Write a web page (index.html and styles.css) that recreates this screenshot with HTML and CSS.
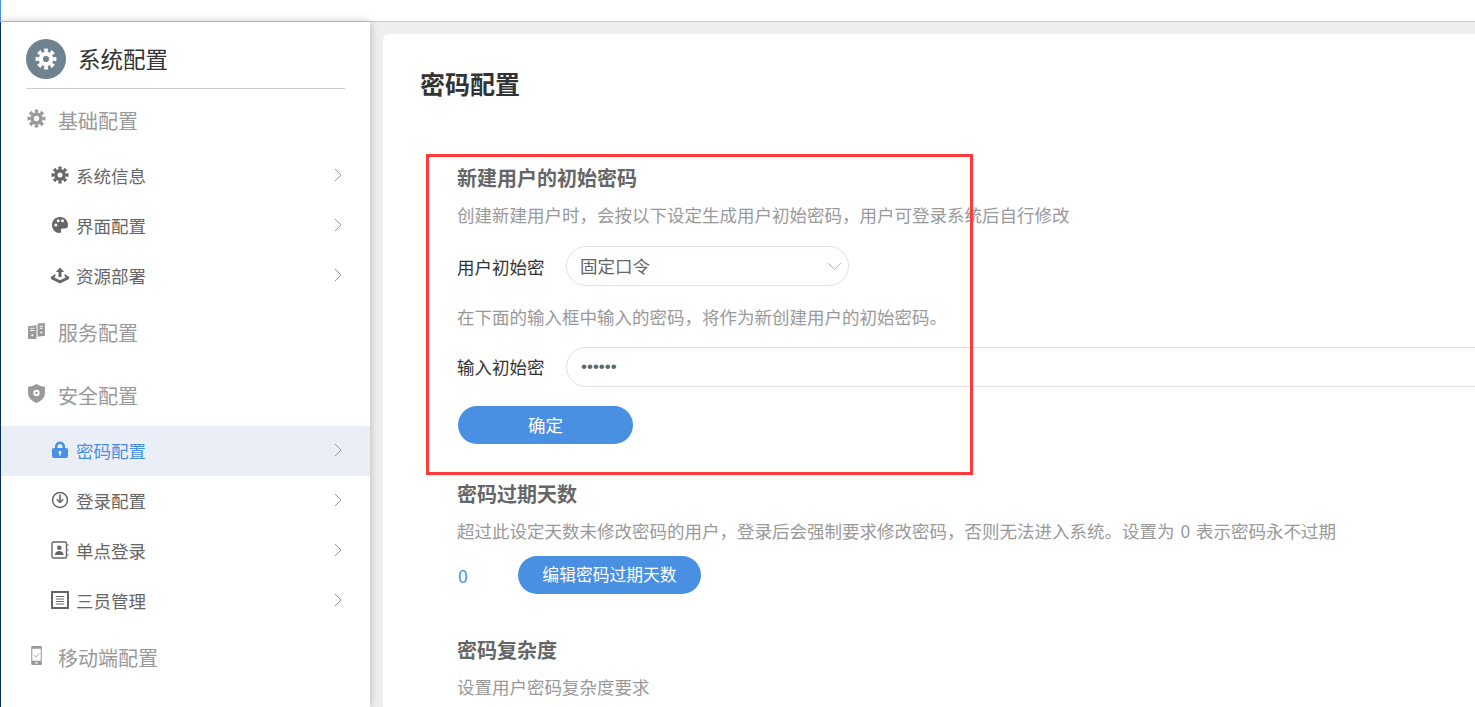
FILE: index.html
```html
<!DOCTYPE html>
<html lang="zh-CN">
<head>
<meta charset="utf-8">
<title>密码配置</title>
<link rel="stylesheet" href="styles.css">
</head>
<body>
<svg class="defs" width="0" height="0" aria-hidden="true">
  <symbol id="gear" viewBox="0 0 20 20">
    <circle cx="10" cy="10" r="4.7" fill="none" stroke="currentColor" stroke-width="3.8"/>
    <circle cx="10" cy="10" r="7.9" fill="none" stroke="currentColor" stroke-width="3.2" stroke-dasharray="3.6 2.6" stroke-dashoffset="1.8" pathLength="49.6"/>
  </symbol>
  <symbol id="chev" viewBox="0 0 8 14">
    <path d="M1 1l6 6-6 6" fill="none" stroke="currentColor" stroke-width="1"/>
  </symbol>
</svg>
<div class="topbar"></div>
<div class="shell">
  <aside class="sidebar">
    <header class="side-head">
      <span class="side-logo"><svg class="logo-gear"><use href="#gear"/></svg></span>
      <span class="side-title">系统配置</span>
    </header>
    <div class="group"><svg class="gicon"><use href="#gear"/></svg><span>基础配置</span></div>
    <ul class="items">
      <li class="item"><svg class="iicon"><use href="#gear"/></svg><span class="item-text">系统信息</span><svg class="chev"><use href="#chev"/></svg></li>
      <li class="item">
        <svg class="iicon" viewBox="0 0 18 18"><path fill-rule="evenodd" d="M9 1C4.400 1 1 4.600 1 9c0 4.500 3.500 8 7.500 8 1.700 0 2-1.100 1.500-2.200-.6-1.300.2-2.300 1.500-2.300H14c2 0 3-1.500 3-3.500C17 4.300 13.500 1 9 1zM4.800 10.600a1.500 1.500 0 1 1 0-3 1.500 1.500 0 0 1 0 3zM7.200 6.300a1.500 1.500 0 1 1 0-3 1.500 1.500 0 0 1 0 3zM11.500 6.300a1.500 1.500 0 1 1 0-3 1.500 1.500 0 0 1 0 3z" fill="currentColor"/></svg>
        <span class="item-text">界面配置</span><svg class="chev"><use href="#chev"/></svg></li>
      <li class="item">
        <svg class="iicon" viewBox="0 0 18 18"><path d="M9 1.500L4.800 6H7.500v5h3V6h2.700z" fill="currentColor"/><path d="M4.500 8L0 10.700v2.300l9 4.500 9-4.500v-2.300L13.500 8v2.200l1.500 1-6 3-6-3 1.500-1z" fill="currentColor"/></svg>
        <span class="item-text">资源部署</span><svg class="chev"><use href="#chev"/></svg></li>
    </ul>
    <div class="group group-tall">
      <svg class="gicon" viewBox="0 0 18 18"><path d="M1 4l8-1v13H1z" fill="currentColor"/><path d="M10 1.500l7-.5v12l-7 1z" fill="currentColor"/><path d="M3 6h4M3 8h4M12 4h3M12 6h3" stroke="#fff"/><circle cx="13.500" cy="10" r="1" fill="#fff"/><circle cx="5" cy="12.500" r="1" fill="#fff"/></svg>
      <span>服务配置</span></div>
    <div class="group">
      <svg class="gicon" viewBox="0 0 18 18"><path fill-rule="evenodd" d="M9 0c2.500 1.500 5 2.500 8 2.500v6c0 4.500-3.500 7.500-8 9.500-4.500-2-8-5-8-9.500v-6c3 0 5.500-1 8-2.500zM9 5.500a3 3 0 1 0 0 6 3 3 0 0 0 0-6z" fill="currentColor"/><circle cx="9" cy="8.500" r="1.200" fill="currentColor"/></svg>
      <span>安全配置</span></div>
    <ul class="items">
      <li class="item item-active">
        <svg class="iicon" viewBox="0 0 18 18"><path fill-rule="evenodd" d="M3 7h1V5.500a5 5 0 0 1 10 0V7h1a2 2 0 0 1 2 2v6a2 2 0 0 1-2 2H3a2 2 0 0 1-2-2V9a2 2 0 0 1 2-2zM6.500 7h5V5.500a2.500 2.500 0 0 0-5 0zM9 9.800a1.500 1.500 0 0 0-.8 2.800V14.500h1.600v-1.900A1.500 1.500 0 0 0 9 9.800z" fill="currentColor"/></svg>
        <span class="item-text">密码配置</span><svg class="chev"><use href="#chev"/></svg></li>
      <li class="item">
        <svg class="iicon" viewBox="0 0 18 18"><circle cx="9" cy="9" r="7.500" fill="none" stroke="currentColor" stroke-width="1.500"/><path d="M8.200 3.500h1.600v6.200l2-2 1 1L9 12.500 5.200 8.700l1-1 2 2z" fill="currentColor"/></svg>
        <span class="item-text">登录配置</span><svg class="chev"><use href="#chev"/></svg></li>
      <li class="item">
        <svg class="iicon" viewBox="0 0 18 18"><rect x="1" y="1" width="14.500" height="16" rx="1.500" fill="none" stroke="currentColor" stroke-width="1.400"/><circle cx="8.300" cy="6.800" r="2.300" fill="currentColor"/><path d="M4 14c0-3 2-4 4.300-4s4.200 1 4.200 4z" fill="currentColor"/><path d="M16 4h1.500M16 9h1.500M16 14h1.500" stroke="currentColor"/></svg>
        <span class="item-text">单点登录</span><svg class="chev"><use href="#chev"/></svg></li>
      <li class="item">
        <svg class="iicon" viewBox="0 0 18 18"><rect x="1" y="1" width="16" height="16" fill="none" stroke="currentColor" stroke-width="2"/><path d="M5 5.500h8M5 8h8M5 10.500h8M5 13h8" stroke="currentColor" stroke-width="1.200"/></svg>
        <span class="item-text">三员管理</span><svg class="chev"><use href="#chev"/></svg></li>
    </ul>
    <div class="group group-last">
      <svg class="gicon" viewBox="0 0 18 18"><path fill-rule="evenodd" d="M5 0h8a1 1 0 0 1 1 1v16a1 1 0 0 1-1 1H5a1 1 0 0 1-1-1V1a1 1 0 0 1 1-1zM5 2.500v11.500h8V2.500z" fill="currentColor"/><path d="M6.500 8.500l2 2 3-3.500" fill="none" stroke="currentColor" stroke-width=".8"/><rect x="7.500" y="15.500" width="3" height="1" fill="#fff"/></svg>
      <span>移动端配置</span></div>
  </aside>
  <main class="main">
    <div class="card">
      <h1 class="page-title">密码配置</h1>
      <section class="section section-first">
        <h2 class="sec-title">新建用户的初始密码</h2>
        <p class="desc">创建新建用户时，会按以下设定生成用户初始密码，用户可登录系统后自行修改</p>
        <div class="field">
          <label class="label">用户初始密</label>
          <div class="select"><span class="select-text">固定口令</span><svg class="select-chev" viewBox="0 0 15 9"><path d="M1 1l6.500 6.500L14 1" fill="none" stroke="currentColor"/></svg></div>
        </div>
        <p class="desc desc-mid">在下面的输入框中输入的密码，将作为新创建用户的初始密码。</p>
        <div class="field field-input">
          <label class="label label-input" for="pw">输入初始密</label>
          <input id="pw" class="input" type="password" value="123456">
        </div>
        <button class="btn btn-ok" type="button">确定</button>
        <div class="annotation"></div>
      </section>
      <section class="section section-expire">
        <h2 class="sec-title">密码过期天数</h2>
        <p class="desc desc-spaced">超过此设定天数未修改密码的用户，登录后会强制要求修改密码，否则无法进入系统。设置为 0 表示密码永不过期</p>
        <div class="expire-row">
          <span class="expire-val">0</span>
          <button class="btn btn-edit" type="button">编辑密码过期天数</button>
        </div>
      </section>
      <section class="section section-complex">
        <h2 class="sec-title">密码复杂度</h2>
        <p class="desc">设置用户密码复杂度要求</p>
      </section>
    </div>
  </main>
</div>
</body>
</html>
```
FILE: styles.css
```css
* { box-sizing: border-box; }
html, body { margin: 0; height: 100%; overflow: hidden; }
body {
  font-family: "Noto Sans CJK SC", "Liberation Sans", sans-serif;
  font-size: 17.5px;
  background: #fff;
  display: flex;
  flex-direction: column;
}
.defs { position: absolute; }
.topbar {
  flex: none;
  height: 22px;
  background: #fff;
  border-bottom: 1px solid #c6c6c6;
  border-left: 1px solid #4a90e2;
}
.shell {
  flex: 1;
  min-height: 0;
  display: flex;
  background: #eee;
  border-left: 1px solid #0b3566;
}
.sidebar {
  flex: none;
  width: 369px;
  background: #fff;
  box-shadow: 0 0 8px rgba(0, 0, 0, .25);
  position: relative;
  z-index: 1;
}
.side-head {
  display: flex;
  align-items: center;
  gap: 12px;
  margin: 0 25px 0 25px;
  padding: 17px 0 9px;
  border-bottom: 1px solid #ccc;
}
.side-logo {
  width: 40px;
  height: 40px;
  border-radius: 50%;
  background: #6f828f;
  color: #fff;
  display: flex;
  align-items: center;
  justify-content: center;
}
.logo-gear { width: 22px; height: 22px; }
.side-title { font-size: 22.5px; color: #333; line-height: 30px; padding-bottom: 2px; }
.group {
  height: 62px;
  display: flex;
  align-items: center;
  gap: 12px;
  padding-left: 26px;
  font-size: 20px;
  color: #999;
}
.group-tall { height: 63px; }
.group-last { height: 64px; padding-bottom: 2px; }
.gicon { width: 19px; height: 19px; flex: none; margin-bottom: 3px; }
.items { list-style: none; margin: 0; padding: 0; }
.item {
  height: 50px;
  display: flex;
  align-items: center;
  padding: 0 28px 2px 50px;
  color: #666;
}
.item-active { background: #eaeff7; color: #4a90e2; }
.iicon { width: 18px; height: 18px; flex: none; }
.item-text { margin-left: 7px; flex: 1; }
.chev { width: 8px; height: 14px; color: #999; flex: none; }
.main { flex: 1; min-width: 0; padding: 12px 0 0 13px; overflow: hidden; }
.card {
  background: #fff;
  border-radius: 6px 0 0 0;
  height: 100%;
  padding: 30px 0 0 37px;
  overflow: hidden;
}
.page-title {
  margin: 0;
  font-size: 25px;
  line-height: 38px;
  font-weight: 700;
  color: #333;
}
.section { margin-left: 37px; position: relative; }
.section-first { margin-top: 62px; }
.section-expire { margin-top: 36px; }
.section-complex { margin-top: 42px; }
.sec-title {
  margin: 0;
  font-size: 20px;
  line-height: 28px;
  font-weight: 700;
  color: #666;
}
.desc {
  margin: 9px 0 0;
  line-height: 28px;
  color: #999;
  white-space: nowrap;
}
.desc-spaced { word-spacing: 2px; }
.desc-mid { margin-top: 17px; }
.field { display: flex; align-items: center; gap: 21px; margin-top: 17px; }
.field-input { margin-top: 16px; }
.label { width: 88px; flex: none; color: #333; white-space: nowrap; }
.label-input { padding-bottom: 2px; }
.select {
  width: 283px;
  height: 40px;
  border: 1px solid #e0e0e8;
  border-radius: 20px;
  padding: 0 6px 0 14px;
  display: flex;
  align-items: center;
  justify-content: space-between;
  color: #666;
}
.select-text { padding-bottom: 2px; margin-left: -1px; }
.select-chev { width: 15px; height: 9px; color: #b4b4bc; }
.input {
  width: 1100px;
  flex: none;
  height: 40px;
  border: 1px solid #e0e0e8;
  border-radius: 20px;
  padding: 0 14px;
  font-family: "Liberation Sans", sans-serif;
  font-size: 17px;
  letter-spacing: 0;
  color: #666;
  outline: none;
}
.btn {
  display: block;
  height: 38px;
  border: 0;
  border-radius: 19px;
  background: #4a90e2;
  color: #fff;
  font: inherit;
  padding: 0 0 2px;
}
.btn-ok { width: 175px; margin-top: 19px; margin-left: 1px; }
.btn-edit { width: 183px; font-size: 16.8px; }
.annotation {
  position: absolute;
  left: -31px;
  top: -10px;
  width: 547px;
  height: 321px;
  border: 3px solid #ff3b3b;
  pointer-events: none;
}
.expire-row { display: flex; align-items: center; margin-top: 11px; }
.expire-val { width: 61px; color: #4a90e2; margin-left: 1px; margin-right: -1px; }
```
